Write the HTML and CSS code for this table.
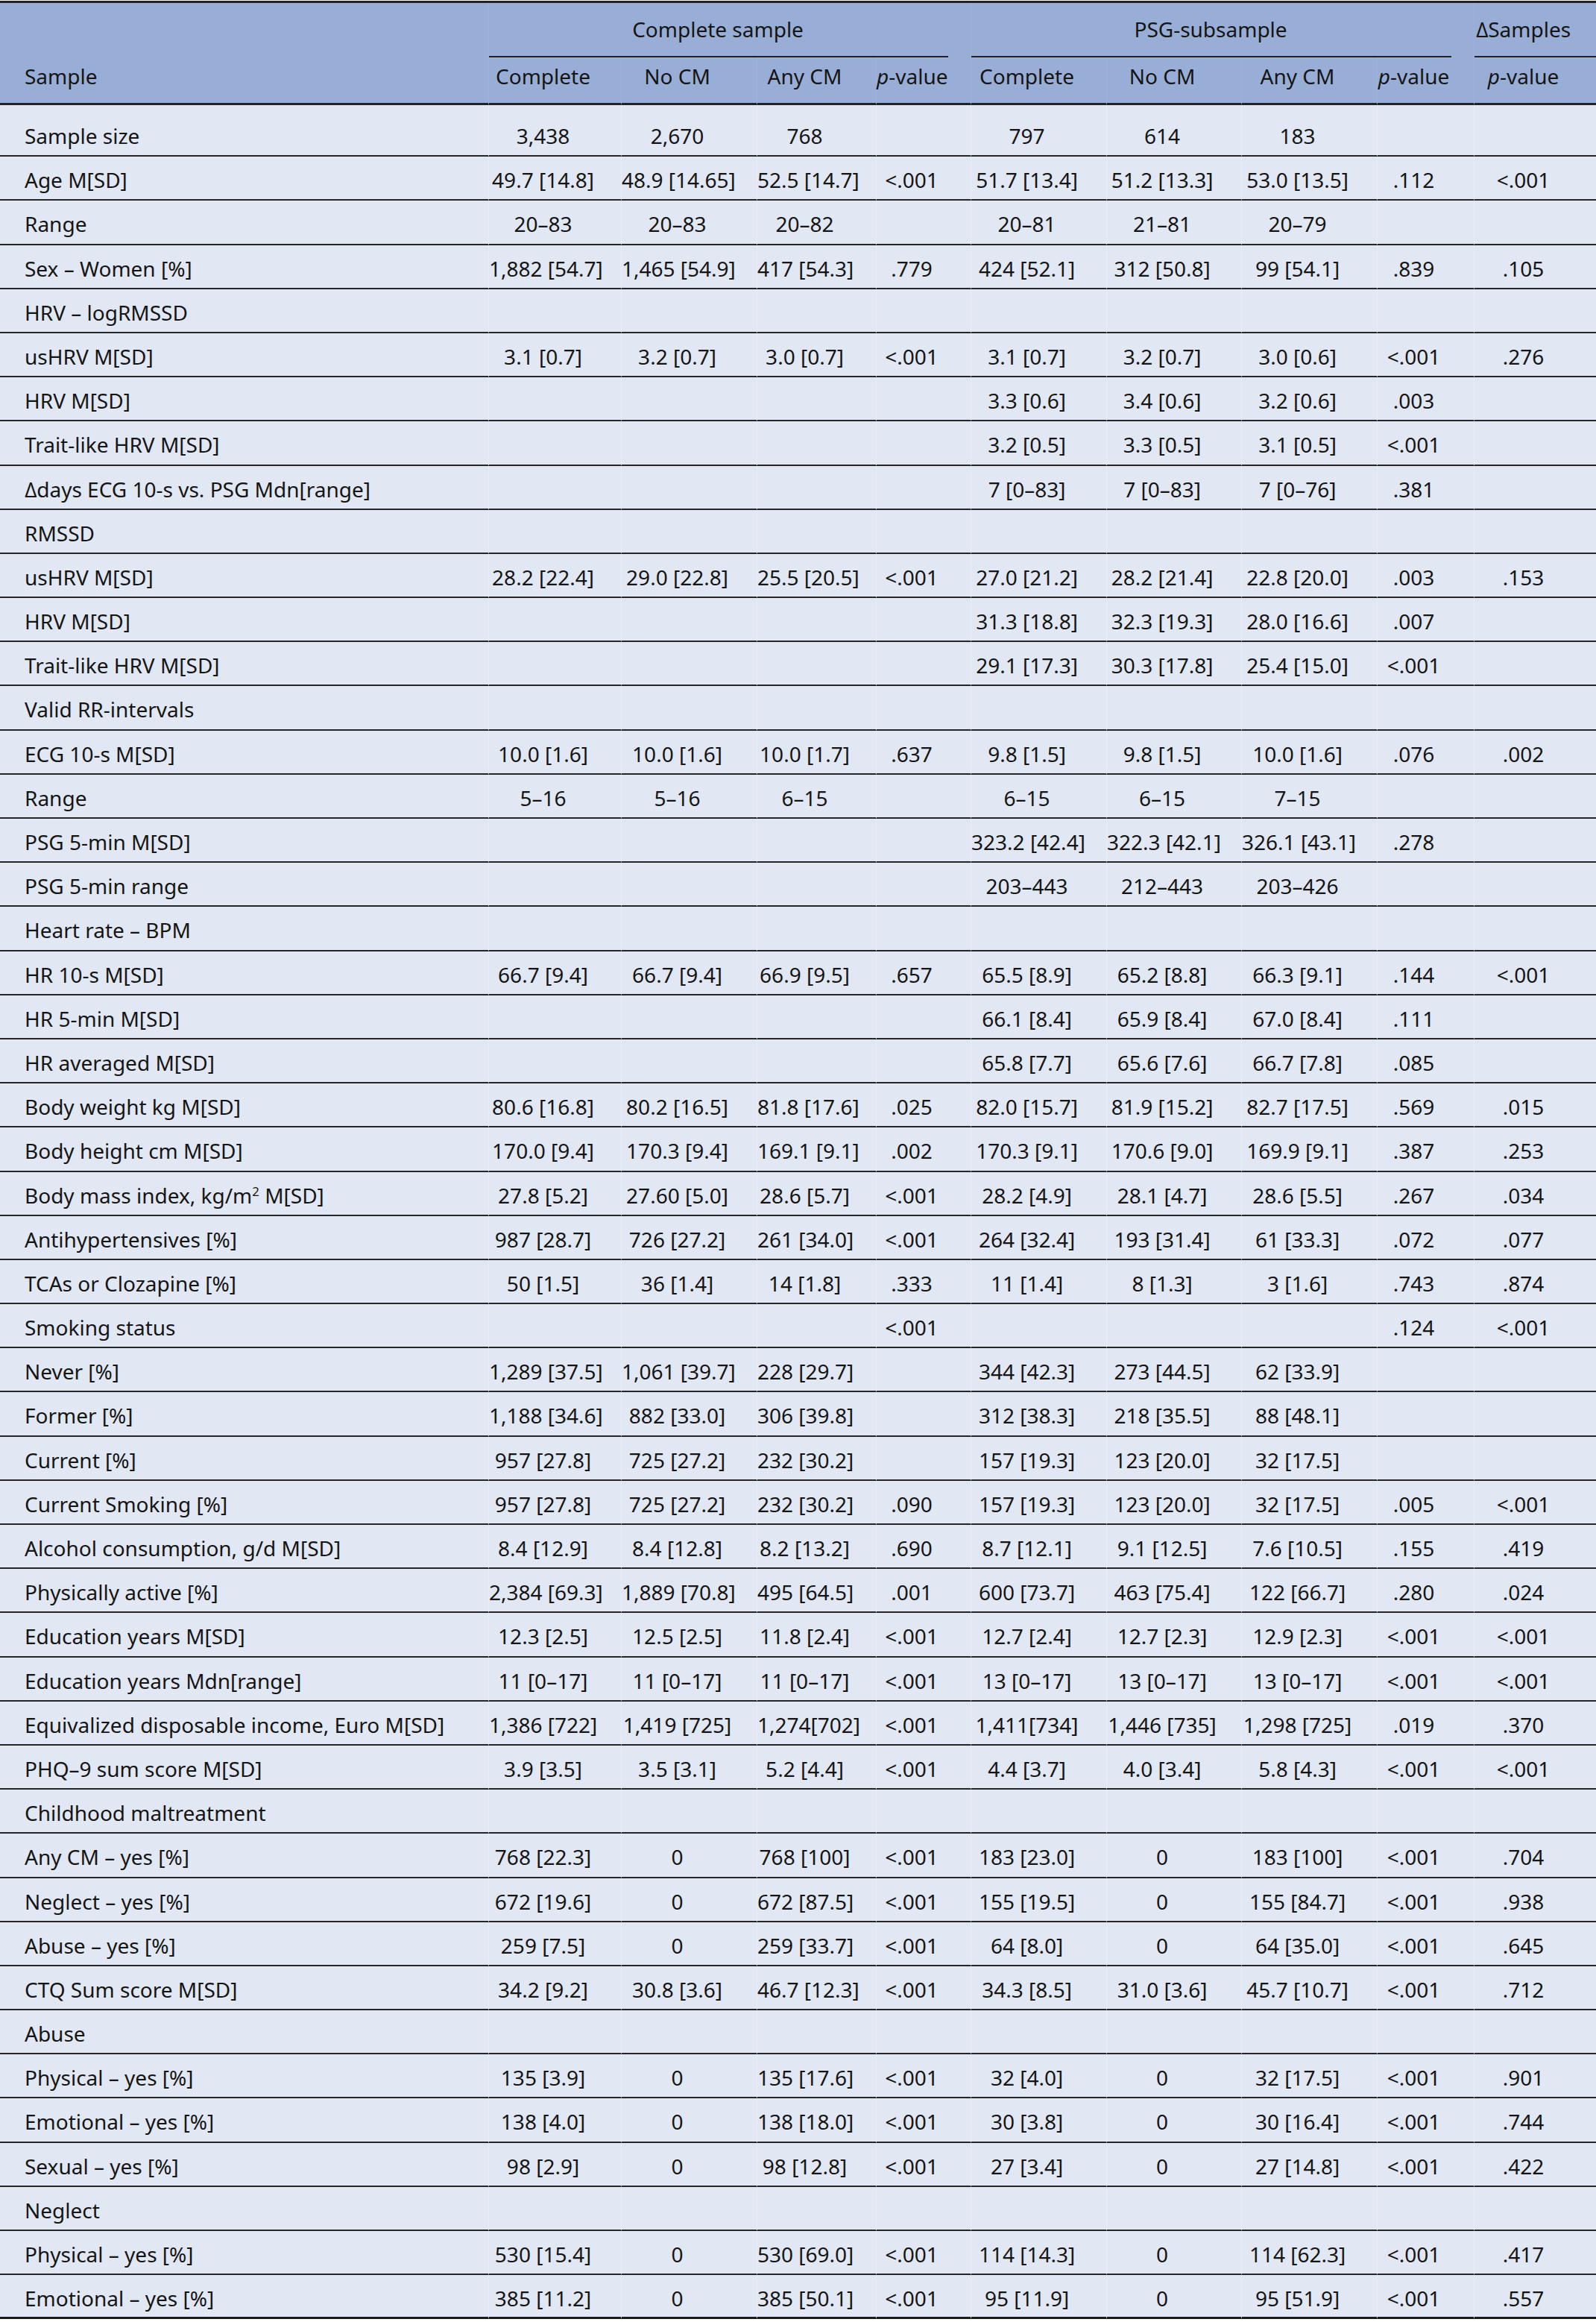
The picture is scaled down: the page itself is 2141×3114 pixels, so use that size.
FILE: index.html
```html
<!DOCTYPE html>
<html lang="en">
<head>
<meta charset="utf-8">
<title>Sample characteristics</title>
<link rel="stylesheet" href="styles.css">
</head>
<body>
<table class="t">
  <colgroup>
    <col class="c-lab"><col class="c1"><col class="c2"><col class="c3"><col class="c4"><col class="c5"><col class="c6"><col class="c7"><col class="c8"><col class="c9">
  </colgroup>
  <thead>
    <tr>
      <th class="lab" rowspan="2">Sample</th>
      <th class="group" colspan="4"><div class="gl">Complete sample</div></th>
      <th class="group" colspan="4"><div class="gl">PSG-subsample</div></th>
      <th class="group"><div class="gl last">∆Samples</div></th>
    </tr>
    <tr>
      <th class="sub">Complete</th>
      <th class="sub">No CM</th>
      <th class="sub">Any CM</th>
      <th class="sub"><i>p</i>-value</th>
      <th class="sub">Complete</th>
      <th class="sub">No CM</th>
      <th class="sub">Any CM</th>
      <th class="sub"><i>p</i>-value</th>
      <th class="sub"><i>p</i>-value</th>
    </tr>
  </thead>
  <tbody>
    <tr class="first"><td>Sample size</td><td>3,438</td><td>2,670</td><td>768</td><td></td><td>797</td><td>614</td><td>183</td><td></td><td></td></tr>
    <tr><td>Age M[SD]</td><td>49.7 [14.8]</td><td>48.9 [14.65]</td><td>52.5 [14.7]</td><td>&lt;.001</td><td>51.7 [13.4]</td><td>51.2 [13.3]</td><td>53.0 [13.5]</td><td>.112</td><td>&lt;.001</td></tr>
    <tr><td>Range</td><td>20–83</td><td>20–83</td><td>20–82</td><td></td><td>20–81</td><td>21–81</td><td>20–79</td><td></td><td></td></tr>
    <tr><td>Sex – Women [%]</td><td>1,882 [54.7]</td><td>1,465 [54.9]</td><td>417 [54.3]</td><td>.779</td><td>424 [52.1]</td><td>312 [50.8]</td><td>99 [54.1]</td><td>.839</td><td>.105</td></tr>
    <tr><td>HRV – logRMSSD</td><td></td><td></td><td></td><td></td><td></td><td></td><td></td><td></td><td></td></tr>
    <tr><td>usHRV M[SD]</td><td>3.1 [0.7]</td><td>3.2 [0.7]</td><td>3.0 [0.7]</td><td>&lt;.001</td><td>3.1 [0.7]</td><td>3.2 [0.7]</td><td>3.0 [0.6]</td><td>&lt;.001</td><td>.276</td></tr>
    <tr><td>HRV M[SD]</td><td></td><td></td><td></td><td></td><td>3.3 [0.6]</td><td>3.4 [0.6]</td><td>3.2 [0.6]</td><td>.003</td><td></td></tr>
    <tr><td>Trait-like HRV M[SD]</td><td></td><td></td><td></td><td></td><td>3.2 [0.5]</td><td>3.3 [0.5]</td><td>3.1 [0.5]</td><td>&lt;.001</td><td></td></tr>
    <tr><td>∆days ECG 10-s vs. PSG Mdn[range]</td><td></td><td></td><td></td><td></td><td>7 [0–83]</td><td>7 [0–83]</td><td>7 [0–76]</td><td>.381</td><td></td></tr>
    <tr><td>RMSSD</td><td></td><td></td><td></td><td></td><td></td><td></td><td></td><td></td><td></td></tr>
    <tr><td>usHRV M[SD]</td><td>28.2 [22.4]</td><td>29.0 [22.8]</td><td>25.5 [20.5]</td><td>&lt;.001</td><td>27.0 [21.2]</td><td>28.2 [21.4]</td><td>22.8 [20.0]</td><td>.003</td><td>.153</td></tr>
    <tr><td>HRV M[SD]</td><td></td><td></td><td></td><td></td><td>31.3 [18.8]</td><td>32.3 [19.3]</td><td>28.0 [16.6]</td><td>.007</td><td></td></tr>
    <tr><td>Trait-like HRV M[SD]</td><td></td><td></td><td></td><td></td><td>29.1 [17.3]</td><td>30.3 [17.8]</td><td>25.4 [15.0]</td><td>&lt;.001</td><td></td></tr>
    <tr><td>Valid RR-intervals</td><td></td><td></td><td></td><td></td><td></td><td></td><td></td><td></td><td></td></tr>
    <tr><td>ECG 10-s M[SD]</td><td>10.0 [1.6]</td><td>10.0 [1.6]</td><td>10.0 [1.7]</td><td>.637</td><td>9.8 [1.5]</td><td>9.8 [1.5]</td><td>10.0 [1.6]</td><td>.076</td><td>.002</td></tr>
    <tr><td>Range</td><td>5–16</td><td>5–16</td><td>6–15</td><td></td><td>6–15</td><td>6–15</td><td>7–15</td><td></td><td></td></tr>
    <tr><td>PSG 5-min M[SD]</td><td></td><td></td><td></td><td></td><td>323.2 [42.4]</td><td>322.3 [42.1]</td><td>326.1 [43.1]</td><td>.278</td><td></td></tr>
    <tr><td>PSG 5-min range</td><td></td><td></td><td></td><td></td><td>203–443</td><td>212–443</td><td>203–426</td><td></td><td></td></tr>
    <tr><td>Heart rate – BPM</td><td></td><td></td><td></td><td></td><td></td><td></td><td></td><td></td><td></td></tr>
    <tr><td>HR 10-s M[SD]</td><td>66.7 [9.4]</td><td>66.7 [9.4]</td><td>66.9 [9.5]</td><td>.657</td><td>65.5 [8.9]</td><td>65.2 [8.8]</td><td>66.3 [9.1]</td><td>.144</td><td>&lt;.001</td></tr>
    <tr><td>HR 5-min M[SD]</td><td></td><td></td><td></td><td></td><td>66.1 [8.4]</td><td>65.9 [8.4]</td><td>67.0 [8.4]</td><td>.111</td><td></td></tr>
    <tr><td>HR averaged M[SD]</td><td></td><td></td><td></td><td></td><td>65.8 [7.7]</td><td>65.6 [7.6]</td><td>66.7 [7.8]</td><td>.085</td><td></td></tr>
    <tr><td>Body weight kg M[SD]</td><td>80.6 [16.8]</td><td>80.2 [16.5]</td><td>81.8 [17.6]</td><td>.025</td><td>82.0 [15.7]</td><td>81.9 [15.2]</td><td>82.7 [17.5]</td><td>.569</td><td>.015</td></tr>
    <tr><td>Body height cm M[SD]</td><td>170.0 [9.4]</td><td>170.3 [9.4]</td><td>169.1 [9.1]</td><td>.002</td><td>170.3 [9.1]</td><td>170.6 [9.0]</td><td>169.9 [9.1]</td><td>.387</td><td>.253</td></tr>
    <tr><td>Body mass index, kg/m<sup>2</sup> M[SD]</td><td>27.8 [5.2]</td><td>27.60 [5.0]</td><td>28.6 [5.7]</td><td>&lt;.001</td><td>28.2 [4.9]</td><td>28.1 [4.7]</td><td>28.6 [5.5]</td><td>.267</td><td>.034</td></tr>
    <tr><td>Antihypertensives [%]</td><td>987 [28.7]</td><td>726 [27.2]</td><td>261 [34.0]</td><td>&lt;.001</td><td>264 [32.4]</td><td>193 [31.4]</td><td>61 [33.3]</td><td>.072</td><td>.077</td></tr>
    <tr><td>TCAs or Clozapine [%]</td><td>50 [1.5]</td><td>36 [1.4]</td><td>14 [1.8]</td><td>.333</td><td>11 [1.4]</td><td>8 [1.3]</td><td>3 [1.6]</td><td>.743</td><td>.874</td></tr>
    <tr><td>Smoking status</td><td></td><td></td><td></td><td>&lt;.001</td><td></td><td></td><td></td><td>.124</td><td>&lt;.001</td></tr>
    <tr><td>Never [%]</td><td>1,289 [37.5]</td><td>1,061 [39.7]</td><td>228 [29.7]</td><td></td><td>344 [42.3]</td><td>273 [44.5]</td><td>62 [33.9]</td><td></td><td></td></tr>
    <tr><td>Former [%]</td><td>1,188 [34.6]</td><td>882 [33.0]</td><td>306 [39.8]</td><td></td><td>312 [38.3]</td><td>218 [35.5]</td><td>88 [48.1]</td><td></td><td></td></tr>
    <tr><td>Current [%]</td><td>957 [27.8]</td><td>725 [27.2]</td><td>232 [30.2]</td><td></td><td>157 [19.3]</td><td>123 [20.0]</td><td>32 [17.5]</td><td></td><td></td></tr>
    <tr><td>Current Smoking [%]</td><td>957 [27.8]</td><td>725 [27.2]</td><td>232 [30.2]</td><td>.090</td><td>157 [19.3]</td><td>123 [20.0]</td><td>32 [17.5]</td><td>.005</td><td>&lt;.001</td></tr>
    <tr><td>Alcohol consumption, g/d M[SD]</td><td>8.4 [12.9]</td><td>8.4 [12.8]</td><td>8.2 [13.2]</td><td>.690</td><td>8.7 [12.1]</td><td>9.1 [12.5]</td><td>7.6 [10.5]</td><td>.155</td><td>.419</td></tr>
    <tr><td>Physically active [%]</td><td>2,384 [69.3]</td><td>1,889 [70.8]</td><td>495 [64.5]</td><td>.001</td><td>600 [73.7]</td><td>463 [75.4]</td><td>122 [66.7]</td><td>.280</td><td>.024</td></tr>
    <tr><td>Education years M[SD]</td><td>12.3 [2.5]</td><td>12.5 [2.5]</td><td>11.8 [2.4]</td><td>&lt;.001</td><td>12.7 [2.4]</td><td>12.7 [2.3]</td><td>12.9 [2.3]</td><td>&lt;.001</td><td>&lt;.001</td></tr>
    <tr><td>Education years Mdn[range]</td><td>11 [0–17]</td><td>11 [0–17]</td><td>11 [0–17]</td><td>&lt;.001</td><td>13 [0–17]</td><td>13 [0–17]</td><td>13 [0–17]</td><td>&lt;.001</td><td>&lt;.001</td></tr>
    <tr><td>Equivalized disposable income, Euro M[SD]</td><td>1,386 [722]</td><td>1,419 [725]</td><td>1,274[702]</td><td>&lt;.001</td><td>1,411[734]</td><td>1,446 [735]</td><td>1,298 [725]</td><td>.019</td><td>.370</td></tr>
    <tr><td>PHQ–9 sum score M[SD]</td><td>3.9 [3.5]</td><td>3.5 [3.1]</td><td>5.2 [4.4]</td><td>&lt;.001</td><td>4.4 [3.7]</td><td>4.0 [3.4]</td><td>5.8 [4.3]</td><td>&lt;.001</td><td>&lt;.001</td></tr>
    <tr><td>Childhood maltreatment</td><td></td><td></td><td></td><td></td><td></td><td></td><td></td><td></td><td></td></tr>
    <tr><td>Any CM – yes [%]</td><td>768 [22.3]</td><td>0</td><td>768 [100]</td><td>&lt;.001</td><td>183 [23.0]</td><td>0</td><td>183 [100]</td><td>&lt;.001</td><td>.704</td></tr>
    <tr><td>Neglect – yes [%]</td><td>672 [19.6]</td><td>0</td><td>672 [87.5]</td><td>&lt;.001</td><td>155 [19.5]</td><td>0</td><td>155 [84.7]</td><td>&lt;.001</td><td>.938</td></tr>
    <tr><td>Abuse – yes [%]</td><td>259 [7.5]</td><td>0</td><td>259 [33.7]</td><td>&lt;.001</td><td>64 [8.0]</td><td>0</td><td>64 [35.0]</td><td>&lt;.001</td><td>.645</td></tr>
    <tr><td>CTQ Sum score M[SD]</td><td>34.2 [9.2]</td><td>30.8 [3.6]</td><td>46.7 [12.3]</td><td>&lt;.001</td><td>34.3 [8.5]</td><td>31.0 [3.6]</td><td>45.7 [10.7]</td><td>&lt;.001</td><td>.712</td></tr>
    <tr><td>Abuse</td><td></td><td></td><td></td><td></td><td></td><td></td><td></td><td></td><td></td></tr>
    <tr><td>Physical – yes [%]</td><td>135 [3.9]</td><td>0</td><td>135 [17.6]</td><td>&lt;.001</td><td>32 [4.0]</td><td>0</td><td>32 [17.5]</td><td>&lt;.001</td><td>.901</td></tr>
    <tr><td>Emotional – yes [%]</td><td>138 [4.0]</td><td>0</td><td>138 [18.0]</td><td>&lt;.001</td><td>30 [3.8]</td><td>0</td><td>30 [16.4]</td><td>&lt;.001</td><td>.744</td></tr>
    <tr><td>Sexual – yes [%]</td><td>98 [2.9]</td><td>0</td><td>98 [12.8]</td><td>&lt;.001</td><td>27 [3.4]</td><td>0</td><td>27 [14.8]</td><td>&lt;.001</td><td>.422</td></tr>
    <tr><td>Neglect</td><td></td><td></td><td></td><td></td><td></td><td></td><td></td><td></td><td></td></tr>
    <tr><td>Physical – yes [%]</td><td>530 [15.4]</td><td>0</td><td>530 [69.0]</td><td>&lt;.001</td><td>114 [14.3]</td><td>0</td><td>114 [62.3]</td><td>&lt;.001</td><td>.417</td></tr>
    <tr class="last-row"><td>Emotional – yes [%]</td><td>385 [11.2]</td><td>0</td><td>385 [50.1]</td><td>&lt;.001</td><td>95 [11.9]</td><td>0</td><td>95 [51.9]</td><td>&lt;.001</td><td>.557</td></tr>
  </tbody>
</table>
</body>
</html>
```
FILE: styles.css
```css
html, body {
  margin: 0;
  padding: 0;
  background: #ffffff;
}

body {
  font-family: "Noto Sans", "Open Sans", sans-serif;
  font-size: 28px;
  color: #151515;
}

.t {
  width: 2141px;
  table-layout: fixed;
  border-collapse: separate;
  border-spacing: 0;
  margin-top: 1px;
  border-top: 3px solid #222222;
}

.c-lab { width: 655px; }
.c1 { width: 178px; }
.c2 { width: 182px; }
.c3 { width: 160px; }
.c4 { width: 127px; }
.c5 { width: 182px; }
.c6 { width: 181px; }
.c7 { width: 182px; }
.c8 { width: 130px; }
.c9 { width: 164px; }

thead th {
  background: #99aed6;
  font-weight: normal;
  line-height: 38px;
  white-space: nowrap;
}

th.lab {
  text-align: left;
  vertical-align: bottom;
  padding: 0 0 17px 33px;
  border-bottom: 3px solid #222222;
}

th.group {
  padding: 0;
  text-align: center;
  border-left: 1px solid #9fb3d9;
}

.gl {
  padding: 16px 2px 17px 0;
  margin-right: 30px;
  border-bottom: 2px solid #222222;
}

.gl.last {
  margin-right: 0;
  padding-right: 32px;
}

th.sub {
  text-align: center;
  padding: 6px 32px 17px 0;
  border-bottom: 3px solid #222222;
  border-left: 1px solid #9fb3d9;
}

tbody td {
  background: #e1e7f3;
  line-height: 38px;
  padding: 12px 32px 7.2px 0;
  text-align: center;
  white-space: nowrap;
  border-bottom: 2px solid #262626;
  border-left: 1px solid #e7ecf6;
}

tbody td:first-child {
  text-align: left;
  padding-left: 33px;
  padding-right: 0;
  border-left: none;
}

tbody tr.first td {
  padding-top: 22px;
}

tbody tr.last-row td {
  border-bottom: 3px solid #1a1a1a;
  padding-bottom: 6.2px;
}

sup {
  font-size: 0.6em;
  line-height: 0;
  vertical-align: super;
}

i {
  font-style: italic;
}
```
